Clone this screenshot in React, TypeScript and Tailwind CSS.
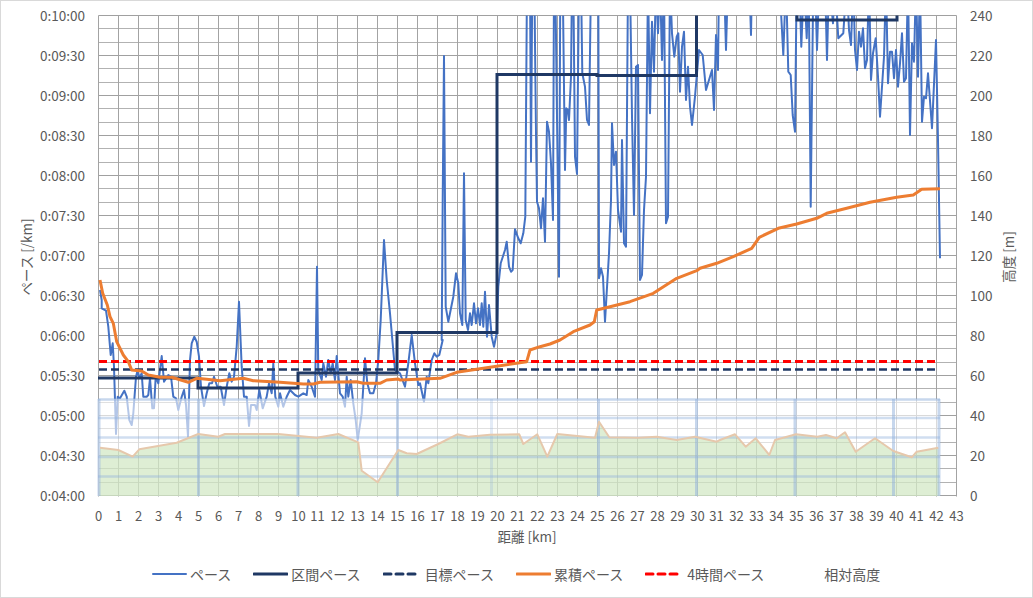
const T = -60;
const conv = (ox: number, oy: number, arr: number[]) => {
  const out: string[] = [];
  for (let i = 0; i < arr.length; i += 2) out.push(`${(ox + arr[i] / 3).toFixed(1)},${(oy + arr[i + 1] / 3).toFixed(1)}`);
  return out.join(' ');
};
const pace = [
  conv(90, 280, [30,30,35,60,35,85,48,92,55,140,62,225,68,190,72,260,78,462,83,350,90,355,103,332,110,350,118,420,125,435,130,400,138,290,143,270,148,295,155,280,160,350,170,350,175,345,180,295,187,385,192,385,197,290,205,310,215,228,222,305,235,285,243,290,250,350,258,355,265,390,275,350,282,330,288,375,294,470,300,240,305,190,313,170,320,185,327,230,333,320,342,378,350,340,358,310,366,310,372,290,382,320,392,320,402,375,410,320,418,280,425,305,432,290,440,200,447,65,455,260,462,350,470,350,477,438,483,375,495,375,500,390,508,330,518,385,530,350,537,310,545,340,550,250,556,350,565,380,570,340,580,380,590,350,600,330,615,345,625,350,640,340,650,345,655,300,665,320,675,350,681,-40,685,270,695,300,700,250,708,290,715,240,722,280,728,250,735,300,740,228,750,340,758,350,765,380,770,290,775,350,782,300,790,370,797,420,803,480,815,400,825,235,832,310,840,340,850,340,858,310,865,240,872,120,882,-120,890,0,900,100,915,270,930,280,945,320,955,250,965,165,975,250,985,315]),
  conv(400, 340, [60,130,72,185,80,110,85,130,95,60,103,40,110,50,118,45,128,0]),
  conv(400, 0, [125,1020,128,600,132,168,137,920,145,965,160,890,168,820,175,850,180,940,187,975,192,520,197,960,204,990,210,940,215,975,222,910,228,970,234,925,240,975,245,910,250,980,255,875,261,1010,267,915,275,1010,282,1040,290,1000,295,860,302,790,315,750,320,725,327,800,333,815,338,810,345,688,355,715,362,730,370,700,376,650,381,T,390,T,393,485,397,T,403,T,408,400,411,605,417,625,423,685,429,595,435,725,441,365,447,395,453,490,459,660,462,T,466,T,471,350,477,830,481,T,488,T,495,510,499,325,503,330,507,360,513,230,516,T,520,T,525,470,531,522,537,T,543,T,547,220,555,260,561,360,567,375,573,T,590,T,595,T,597,835,603,805,609,830,615,965,627,760,633,600,636,370,642,495,648,455,654,630,663,695,666,420,672,730,678,740,684,T,690,T,696,350,702,645,708,200,714,195,720,840,726,825,732,630,738,530,744,T,750,340,756,65,762,215,768,T,774,100,780,T,786,180,792,T,798,670,804,650,810,T,816,100,823,170,830,110,835,100,840,275,846,140,852,95,858,300,864,200,870,320,876,375,885,290,890,230,897,150]),
  conv(700, 0, [8,165,18,270,36,210,42,330,48,105,54,210,57,T,66,T,72,T,78,150,84,T,148,T,153,105,156,T,238,T,250,165,258,T,265,215,272,225,278,345,285,395,290,T,298,T,304,140,312,T,320,115,326,T,332,620,340,T,345,T,351,150,358,T,375,T,381,180,387,T,399,70,405,T,415,115,430,100,440,T,447,90,453,135,460,T,465,150,471,210,477,95,483,140,489,85,495,205,501,180,507,T,513,240,519,160,527,115,534,230,540,350,552,170,558,T,564,250,570,155,576,155,582,235,588,150,594,260,600,190,606,100,612,245,618,235,624,T,630,405,636,130,642,185,648,T,654,230,660,T,666,365,672,290,678,295,684,220,696,385,708,120,714,420,720,775]),
].join(' ');
const orange = [
  conv(90, 280, [30,0,38,40,52,75,60,110,70,130,80,185,100,225,115,245,125,270,155,273,175,285,210,292,245,292,295,307,320,295,350,298,390,302,460,295,490,302,570,307,640,312,670,312,690,307,800,305,820,310,870,310,890,300,925,297]),
  conv(400, 340, [0,120,120,115,170,97,250,85,380,65,390,30,420,20,450,12,480,0]),
  conv(400, 0, [520,995,570,975,583,965,590,930,630,920,690,905,760,880,830,835,890,812]),
  conv(700, 0, [0,805,50,790,100,770,155,745,178,712,235,685,290,672,350,655,380,640,440,625,510,607,590,592,640,585,665,568,720,566]),
].join(' ');
const altPts = [
  conv(90, 280, [30,503,85,510,128,530,148,508,260,488,325,462,385,470,405,462,565,462,680,473,745,462,805,487,815,572,863,607,925,510]),
  conv(400, 340, [20,340,50,342,115,312,172,283,205,290,270,284,358,283,370,312,412,283,442,350,472,282,585,293,597,245,628,292,715,293,770,290,830,300,885,290,950,305]),
  conv(720, 340, [0,300,45,283,77,320,107,295,148,345,165,300,228,283,292,290,318,285,350,295,375,277,407,335,465,295,520,333,575,352,590,335,655,323]),
].join(' ');

const X0 = 98.5;
const KM = 19.95;
const xs = Array.from({ length: 44 }, (_, i) => Math.round(X0 + i * KM - 0.5) + 0.5);
const hLines = Array.from({ length: 37 }, (_, i) => 15.5 + (i * 480) / 36);
const leftLabels = ['0:10:00','0:09:30','0:09:00','0:08:30','0:08:00','0:07:30','0:07:00','0:06:30','0:06:00','0:05:30','0:05:00','0:04:30','0:04:00'];
const font = '"Noto Sans CJK JP", sans-serif';

function Swatch({ color, dashed, thick }: { color?: string; dashed?: boolean; thick?: number }) {
  return (
    <svg width="35" height="6" className="shrink-0">
      {color && <line x1="1" x2="34" y1="3" y2="3" stroke={color} strokeWidth={thick ?? 2} strokeDasharray={dashed ? '7 5' : undefined} strokeLinecap="round" />}
    </svg>
  );
}

function Item({ color, dashed, thick, label, extra }: { color?: string; dashed?: boolean; thick?: number; label: string; extra?: boolean }) {
  return (
    <div className="flex items-center">
      <Swatch color={color} dashed={dashed} thick={thick} />
      <span className={extra ? 'ml-[7px] whitespace-nowrap' : 'ml-[3px] whitespace-nowrap'}>{label}</span>
    </div>
  );
}

export default function App() {
  return (
    <div className="w-[1033px] h-[598px] bg-white border border-[#d9d9d9] flex flex-col overflow-hidden text-[#595959] font-['Noto_Sans_CJK_JP',sans-serif]">
      <svg width="1031" height="560" viewBox="1 1 1031 560" className="block shrink-0" fontFamily={font}>
        <defs>
          <clipPath id="plot"><rect x="96" y="15.5" width="862" height="482" /></clipPath>
        </defs>
        {hLines.map((y, i) => (
          <line key={i} x1={X0} x2={xs[43]} y1={Math.round(y - 0.5) + 0.5} y2={Math.round(y - 0.5) + 0.5} stroke={i % 3 === 0 ? '#a0a0a0' : '#b2b2b2'} strokeWidth="1" />
        ))}
        {xs.map((x, i) => (
          <line key={i} x1={x} x2={x} y1="15.5" y2="496.5" stroke="#a3a3a3" strokeWidth="1" />
        ))}
        <g clipPath="url(#plot)">
          <polyline points={pace} fill="none" stroke="#4472c4" strokeWidth="2" strokeLinejoin="round" />
          <polyline points="98,378 198,378 198,388 298,388 298,373 397,373 397,332.5 497,332.5 497,74.5 597,74.5 597,75.5 696.5,75.5 696.5,10" fill="none" stroke="#1f3864" strokeWidth="3" />
          <polyline points="797,10 797,20 897,20 897,10" fill="none" stroke="#1f3864" strokeWidth="3" />
          <line x1="99" x2="937" y1="369.5" y2="369.5" stroke="#1f3864" strokeWidth="2.7" strokeDasharray="8 4" />
          <line x1="99" x2="937" y1="361.5" y2="361.5" stroke="#ff0000" strokeWidth="3" strokeDasharray="8 4" />
          <polyline points={orange} fill="none" stroke="#ed7d31" strokeWidth="3" strokeLinejoin="round" />
          {/* relative altitude overlay */}
          <rect x="98" y="399" width="842" height="97" fill="#ffffff" fillOpacity="0.6" />
          <polygon points={`99,496 ${altPts} 939.5,496`} fill="#a9d18e" fillOpacity="0.38" />
          {[399.5, 418, 437.5, 457, 476.5].map((y) => (
            <line key={y} x1="98" x2="940" y1={y} y2={y} stroke="#8fb0dc" strokeOpacity={y === 399.5 ? 0.5 : 0.42} strokeWidth="2.5" />
          ))}
          {[99, 198.5, 298, 397.5, 491.5, 598.5, 696.5, 795, 893.5, 939].map((x) => (
            <line key={x} x1={x} x2={x} y1="399" y2="496" stroke="#8fb0dc" strokeOpacity={x === 491.5 ? 0.25 : 0.5} strokeWidth="3" />
          ))}
          <polyline points={altPts} fill="none" stroke="#e6c8ac" strokeWidth="2" strokeLinejoin="round" />
        </g>
        {leftLabels.map((t, i) => (
          <text key={t} x="85" y={20.5 + i * 40} textAnchor="end" fontSize="13.5" fill="#595959">{t}</text>
        ))}
        {Array.from({ length: 13 }, (_, i) => (
          <text key={i} x="970" y={20.5 + i * 40} fontSize="13.5" fill="#595959">{240 - i * 20}</text>
        ))}
        {xs.map((x, i) => (
          <text key={i} x={x} y="521" textAnchor="middle" fontSize="13" fill="#595959">{i}</text>
        ))}
        <text x="527" y="542" textAnchor="middle" fontSize="13.5" fill="#595959">距離 [km]</text>
        <text transform="translate(32 257) rotate(-90)" textAnchor="middle" fontSize="13.5" fill="#595959">ペース [/km]</text>
        <text transform="translate(1014 257) rotate(-90)" textAnchor="middle" fontSize="13.5" fill="#595959">高度 [m]</text>
      </svg>
      <div className="flex items-center gap-[22px] pl-[151px] pt-[3px] text-[14px] leading-[20px]">
        <Item color="#4472c4" label="ペース" />
        <Item color="#1f3864" thick={3} label="区間ペース" />
        <Item color="#1f3864" thick={3} dashed label="目標ペース" extra />
        <Item color="#ed7d31" thick={3} label="累積ペース" />
        <Item color="#ff0000" thick={3} dashed label="4時間ペース" extra />
        <Item label="相対高度" />
      </div>
    </div>
  );
}
